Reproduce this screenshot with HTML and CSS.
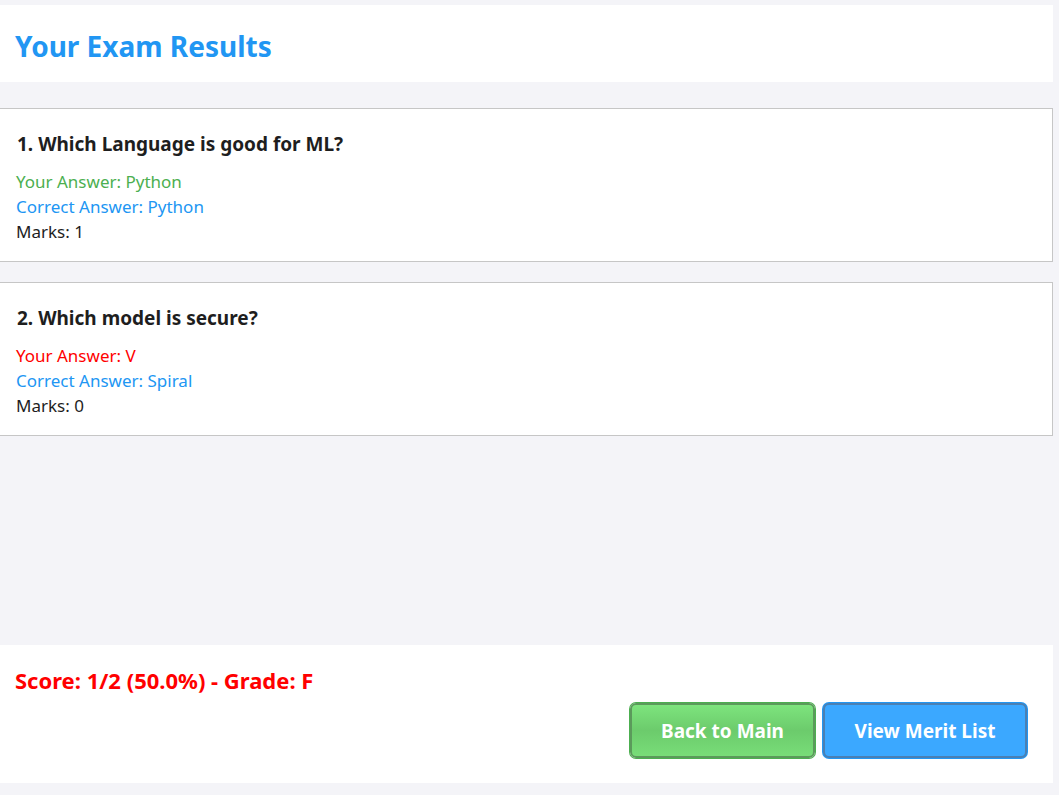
FILE: index.html
```html
<!DOCTYPE html>
<html lang="en">
<head>
<meta charset="utf-8">
<title>Your Exam Results</title>
<link rel="stylesheet" href="styles.css">
</head>
<body>
<div class="app">
  <header class="header">
    <h1 class="title">Your Exam Results</h1>
  </header>
  <main class="results">
    <section class="card">
      <h2 class="question">1. Which Language is good for ML?</h2>
      <p class="line correct-ans">Your Answer: Python</p>
      <p class="line expected">Correct Answer: Python</p>
      <p class="line marks">Marks: 1</p>
    </section>
    <section class="card">
      <h2 class="question">2. Which model is secure?</h2>
      <p class="line wrong-ans">Your Answer: V</p>
      <p class="line expected">Correct Answer: Spiral</p>
      <p class="line marks">Marks: 0</p>
    </section>
  </main>
  <footer class="summary">
    <div class="score">Score: 1/2 (50.0%) - Grade: F</div>
    <div class="actions">
      <button class="btn btn-green">Back to Main</button>
      <button class="btn btn-blue">View Merit List</button>
    </div>
  </footer>
</div>
</body>
</html>
```
FILE: styles.css
```css
* { box-sizing: border-box; }
html, body { margin: 0; padding: 0; }
body {
  background: #f4f4f8;
  font-family: "Noto Sans", "Open Sans", sans-serif;
  color: #1e1e1e;
}
.app {
  height: 795px;
  display: flex;
  flex-direction: column;
  padding: 5px 6px 12px 0;
}
.header {
  background: #fff;
  height: 77px;
  display: flex;
  align-items: center;
  padding-left: 15px;
}
.title {
  margin: 0;
  font-size: 28px;
  font-weight: 700;
  color: #2196f3;
  line-height: 34px;
  padding-top: 4px;
}
.results {
  flex: 1;
  display: flex;
  flex-direction: column;
  gap: 20px;
  padding-top: 26px;
}
.card {
  background: #fff;
  border: 1px solid #c6c6c6;
  border-left: none;
  height: 154px;
  padding: 22px 16px 0 16px;
}
.question {
  margin: 0 0 12px 1px;
  font-size: 19px;
  font-weight: 700;
  line-height: 26px;
  color: #1e1e1e;
}
.line {
  margin: 0;
  font-size: 17px;
  line-height: 25px;
}
.correct-ans { color: #4caf50; }
.wrong-ans { color: #ff0000; }
.expected { color: #2196f3; }
.marks { color: #1e1e1e; }
.summary {
  background: #fff;
  height: 138px;
  padding: 21px 26px 0 15px;
  display: flex;
  flex-direction: column;
  gap: 9px;
}
.score {
  color: #ff0000;
  font-size: 22px;
  font-weight: 700;
  line-height: 28px;
}
.actions {
  display: flex;
  justify-content: flex-end;
  gap: 8px;
}
.btn {
  height: 55px;
  border-radius: 6px;
  font-family: "Noto Sans", "Open Sans", sans-serif;
  font-size: 19px;
  font-weight: 700;
  color: #fff;
  cursor: pointer;
}
.btn-green {
  width: 185px;
  background: linear-gradient(#7de47d, #6ccb6c 50%, #78dd78);
  border: 2px solid #5b9a5b;
  box-shadow: 0 0 0 1px #4caf50;
}
.btn-blue {
  width: 204px;
  background: #3ba8ff;
  border: 2px solid #4a80b4;
  box-shadow: 0 0 0 1px #2196f3;
}
```
